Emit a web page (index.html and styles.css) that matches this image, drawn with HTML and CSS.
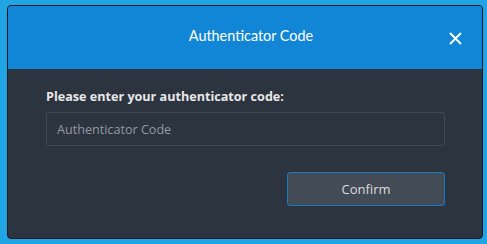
FILE: index.html
```html
<!DOCTYPE html>
<html lang="en">
<head>
  <meta charset="UTF-8" />
  <title>Authenticator Code</title>
  <link rel="stylesheet" href="styles.css">
</head>
<body>
  <div class="modal">
    <div class="modal-header">
      <span></span>
      <div class="modal-title">Authenticator Code</div>
      <button class="close-btn" aria-label="Close">
        <svg width="13" height="13" viewBox="0 0 13 13"><path d="M1 1 L12 12 M12 1 L1 12" stroke="#fff" stroke-width="1.8" fill="none"/></svg>
      </button>
    </div>
    <div class="modal-body">
      <label class="code-label" for="code">Please enter your authenticator code:</label>
      <input type="text" id="code" class="code-input" placeholder="Authenticator Code" />
      <div class="actions">
        <button class="confirm-btn">Confirm</button>
      </div>
    </div>
  </div>
</body>
</html>
```
FILE: styles.css
```css
body {
  margin: 0;
  padding: 5px 4px 5px 7px;
  background: #21a4e3;
  font-family: 'Open Sans', 'Noto Sans', sans-serif;
  height: 244px;
  box-sizing: border-box;
}
.modal {
  height: 234px;
  display: flex;
  flex-direction: column;
  background: #2c3440;
  border: 1px solid #15191e;
  border-radius: 4px;
  overflow: hidden;
  box-sizing: border-box;
}
.modal-header {
  height: 63px;
  flex-shrink: 0;
  background: #1286d6;
  display: grid;
  grid-template-columns: 1fr auto 1fr;
  align-items: center;
  padding: 0 20px 0 0;
}
.modal-title {
  font-family: Lato, sans-serif;
  font-size: 14.4px;
  color: #fff;
  padding-left: 32px;
  margin-top: -5px;
}
.close-btn {
  justify-self: end;
  background: none;
  border: none;
  padding: 0;
  margin-top: 2px;
  display: flex;
  cursor: pointer;
}
.modal-body {
  padding: 19px 37px 0 38px;
  display: flex;
  flex-direction: column;
}
.code-label {
  font-size: 12.6px;
  font-weight: bold;
  color: #e8e8e8;
  line-height: 18px;
  margin-bottom: 6px;
}
.code-input {
  height: 34px;
  box-sizing: border-box;
  background: #2c3440;
  border: 1px solid #414957;
  border-radius: 3px;
  padding: 0 10px;
  font-family: 'Open Sans', 'Noto Sans', sans-serif;
  font-size: 12.6px;
  color: #ddd;
}
.code-input::placeholder {
  color: #9399a2;
}
.actions {
  display: flex;
  justify-content: flex-end;
  margin-top: 26px;
}
.confirm-btn {
  width: 158px;
  height: 34px;
  background: #434b57;
  border: 1px solid #1a7cc0;
  border-radius: 3px;
  color: #dcdcdc;
  font-family: 'Open Sans', 'Noto Sans', sans-serif;
  font-size: 13px;
  cursor: pointer;
}
```
